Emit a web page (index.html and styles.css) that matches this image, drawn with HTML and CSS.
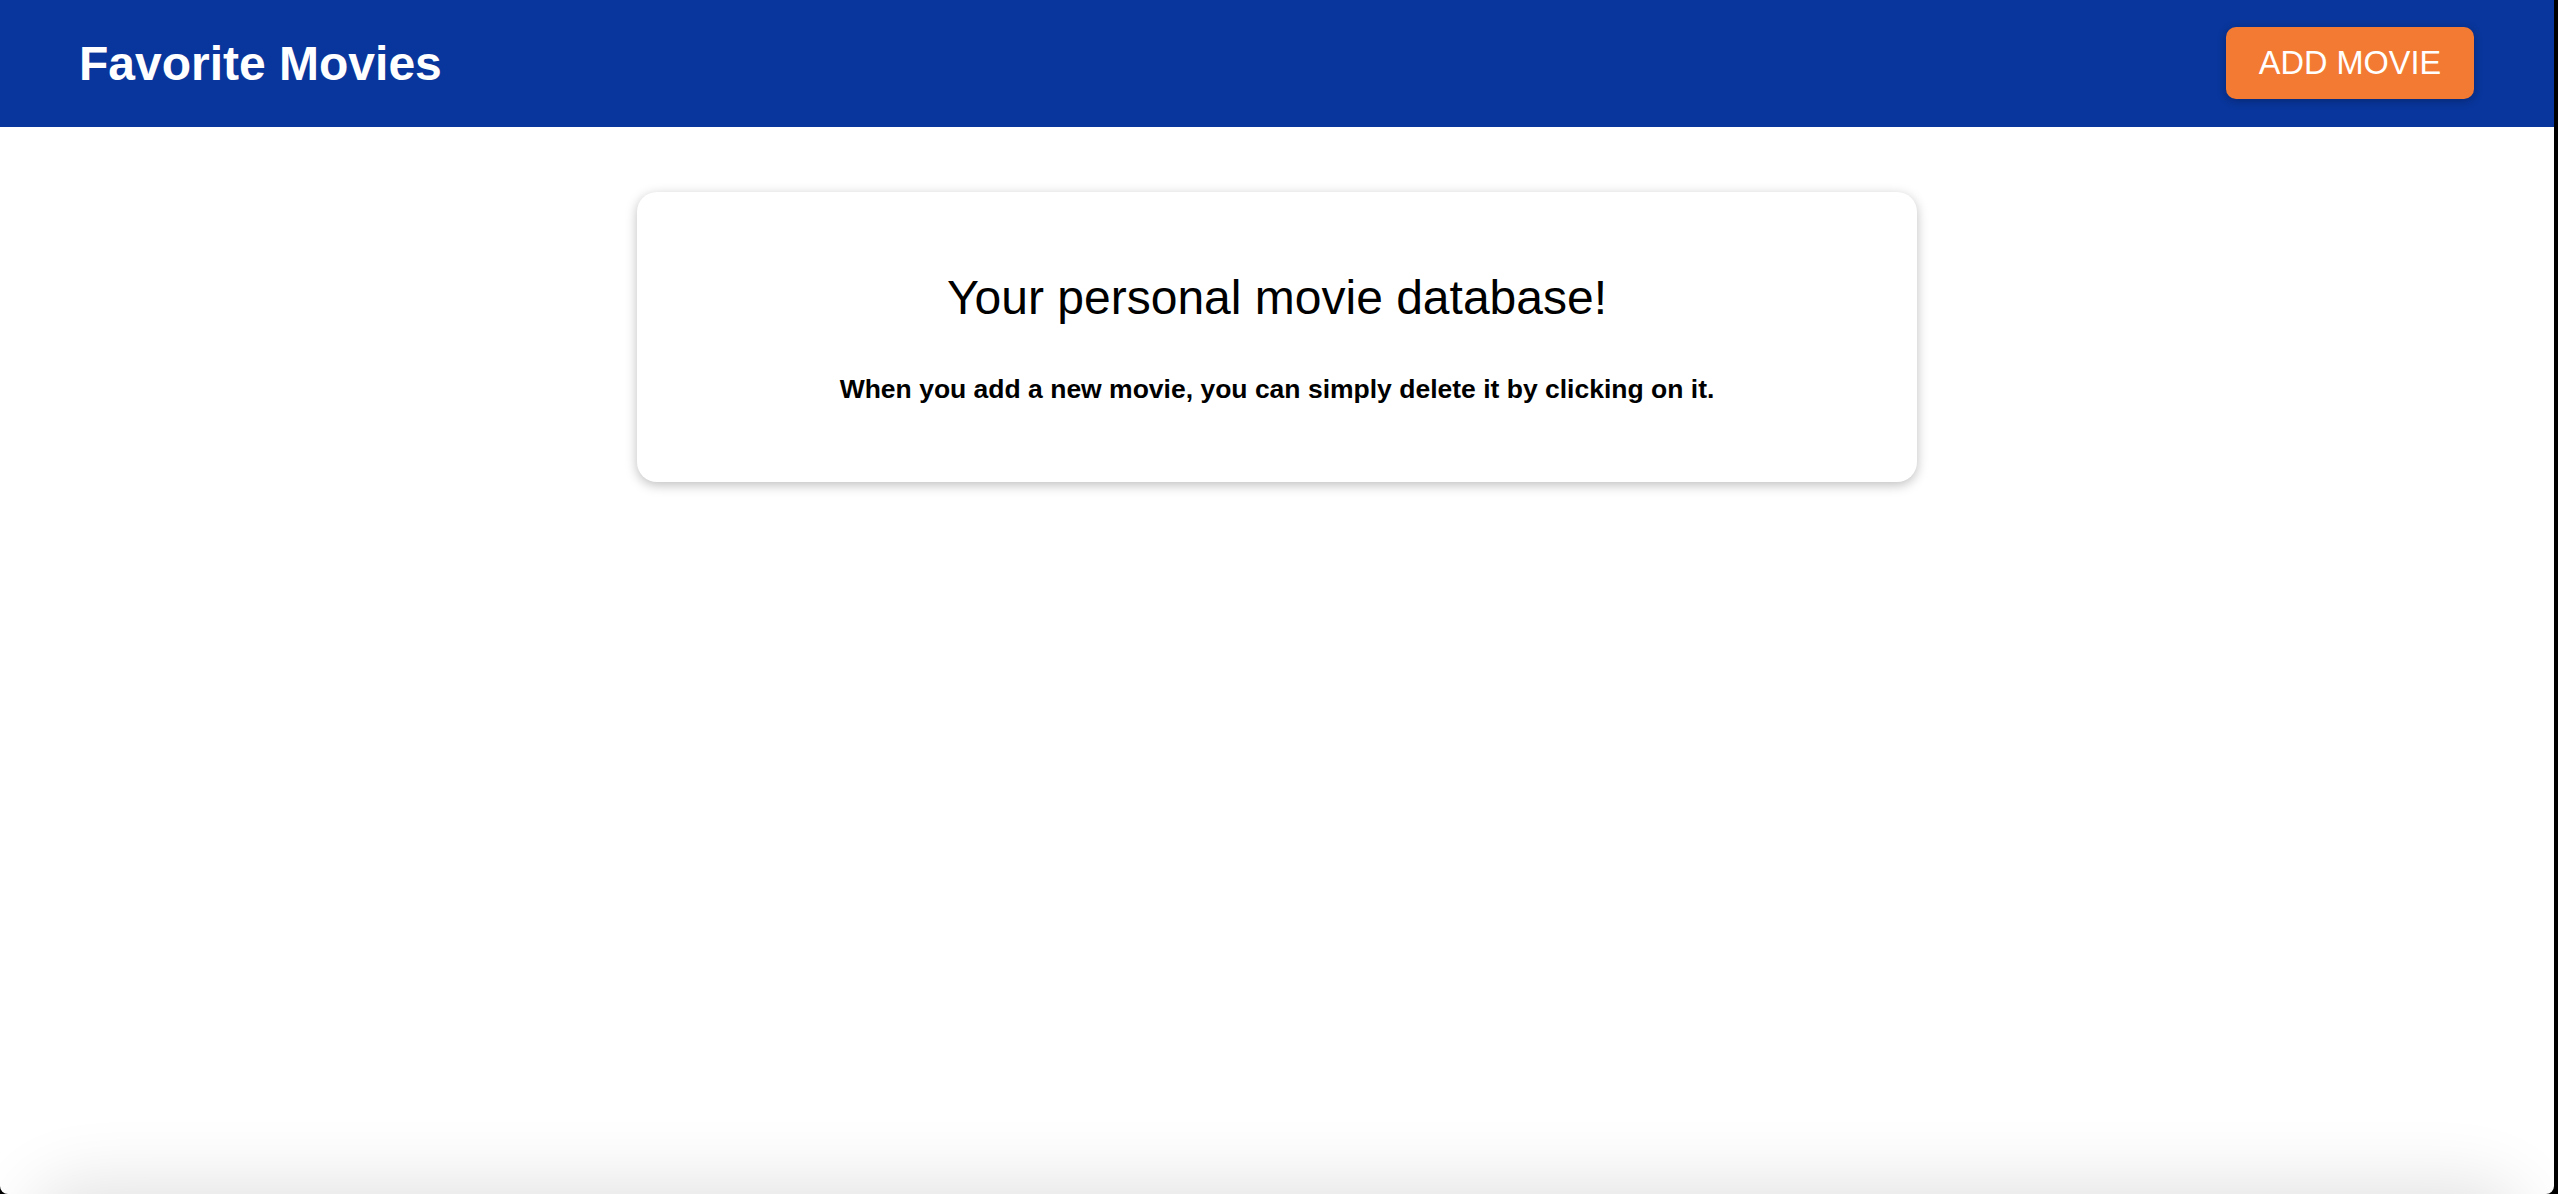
FILE: index.html
```html
<!DOCTYPE html>
<html lang="en">
<head>
<meta charset="utf-8">
<title>Favorite Movies</title>
<link rel="stylesheet" href="styles.css">
</head>
<body>
<div class="window">
  <header class="topbar">
    <h1 class="brand">Favorite Movies</h1>
    <button class="add-btn">ADD MOVIE</button>
  </header>
  <main class="content">
    <section class="intro-card">
      <h2 class="intro-title">Your personal movie database!</h2>
      <p class="intro-text">When you add a new movie, you can simply delete it by clicking on it.</p>
    </section>
  </main>
  <div class="bottom-shade"></div>
</div>
</body>
</html>
```

FILE: styles.css
```css
* { box-sizing: border-box; }
html { background: #000; margin: 0; }
body {
  margin: 0;
  height: 1194px;
  overflow: hidden;
  font-family: "Liberation Sans", Arial, Helvetica, sans-serif;
}
.window {
  position: relative;
  width: calc(100% - 4px);
  height: 100%;
  background: #fff;
  border-bottom-left-radius: 8px;
  border-bottom-right-radius: 8px;
  overflow: hidden;
}
.topbar {
  height: 127px;
  background: #09369c;
  display: flex;
  align-items: center;
  justify-content: space-between;
  padding: 0 80px 0 79px;
}
.brand {
  margin: 0;
  color: #fff;
  font-size: 48px;
  font-weight: 700;
  line-height: 1;
}
.add-btn {
  width: 248px;
  height: 72px;
  margin-top: -1px;
  border: none;
  border-radius: 10px;
  background: #f37a33;
  color: #fff;
  font-family: "Liberation Sans", Arial, Helvetica, sans-serif;
  font-size: 32.5px;
  font-weight: 400;
  box-shadow: 0 2px 8px rgba(0, 0, 0, 0.26);
  padding: 0;
}
.content {
  padding-top: 65px;
  display: flex;
  justify-content: center;
}
.intro-card {
  width: 1280px;
  height: 290px;
  background: #fff;
  border-radius: 20px;
  box-shadow: 0 3px 12px rgba(0, 0, 0, 0.26);
  text-align: center;
  padding-top: 82px;
}
.intro-title {
  margin: 0;
  font-size: 48px;
  font-weight: 400;
  line-height: 1;
  color: #000;
}
.intro-text {
  margin: 54px 0 0;
  font-size: 26.5px;
  font-weight: 700;
  line-height: 1;
  color: #000;
}
.bottom-shade {
  position: absolute;
  left: 40px;
  right: 40px;
  bottom: -80px;
  height: 80px;
  border-radius: 40px;
  box-shadow: 0 0 70px 10px rgba(0, 0, 0, 0.12);
}
```
